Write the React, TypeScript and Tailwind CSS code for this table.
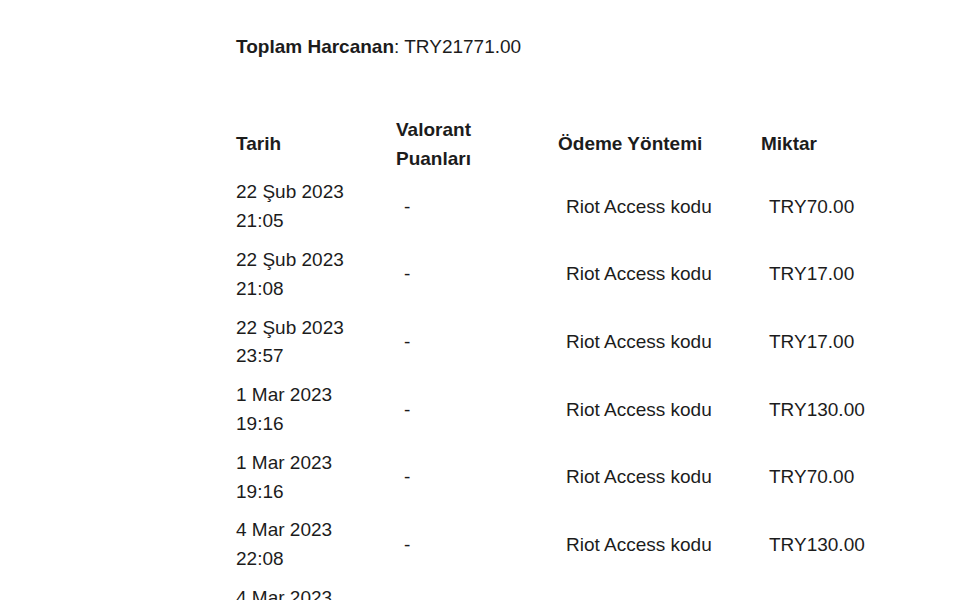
const rows = [
  { date: "22 Şub 2023", time: "21:05", amount: "TRY70.00" },
  { date: "22 Şub 2023", time: "21:08", amount: "TRY17.00" },
  { date: "22 Şub 2023", time: "23:57", amount: "TRY17.00" },
  { date: "1 Mar 2023", time: "19:16", amount: "TRY130.00" },
  { date: "1 Mar 2023", time: "19:16", amount: "TRY70.00" },
  { date: "4 Mar 2023", time: "22:08", amount: "TRY130.00" },
  { date: "4 Mar 2023", time: "22:10", amount: "TRY70.00" },
  { date: "5 Mar 2023", time: "14:32", amount: "TRY17.00" },
];

export default function App() {
  return (
    <div className="min-h-screen bg-white pl-[236px] pt-[33px] font-['Liberation_Sans',Arial,sans-serif] text-[19px] leading-[28.8px] text-[#1c1c1c]">
      <p>
        <span className="font-bold">Toplam Harcanan</span>: TRY21771.00
      </p>

      <table className="mt-[54px] table-fixed border-collapse text-left">
        <colgroup>
          <col className="w-[160px]" />
          <col className="w-[162px]" />
          <col className="w-[203px]" />
          <col className="w-[140px]" />
        </colgroup>
        <thead>
          <tr className="align-middle">
            <th className="p-0 font-bold">Tarih</th>
            <th className="p-0 font-bold">
              Valorant
              <br />
              Puanları
            </th>
            <th className="p-0 font-bold">Ödeme Yöntemi</th>
            <th className="p-0 font-bold">Miktar</th>
          </tr>
        </thead>
        <tbody>
          {rows.map((r, i) => (
            <tr key={i} className="align-middle">
              <td className="py-[5px] pl-0">
                <span className="block">{r.date}</span>
                <span className="block">{r.time}</span>
              </td>
              <td className="py-[5px] pl-[8px]">-</td>
              <td className="py-[5px] pl-[8px]">Riot Access kodu</td>
              <td className="py-[5px] pl-[8px]">{r.amount}</td>
            </tr>
          ))}
        </tbody>
      </table>
    </div>
  );
}
